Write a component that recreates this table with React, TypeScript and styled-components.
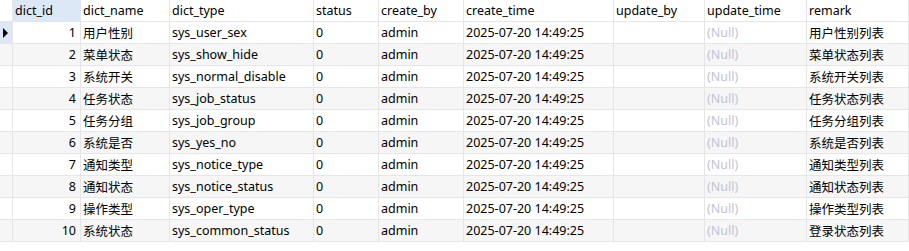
import React from "react";
import styled, { createGlobalStyle } from "styled-components";

const Global = createGlobalStyle`
  html, body { margin: 0; padding: 0; background: #ffffff; }
  body { font-family: "Noto Sans", "Noto Sans CJK SC", sans-serif; }
`;

const COLS = "13px 68px 89px 144px 65px 85px 150px 91px 102px 1fr";

const Grid = styled.div`
  display: grid;
  grid-template-columns: ${COLS};
  width: 909px;
  height: 251px;
  align-content: start;
  background: #ffffff;
  font-size: 12.5px;
  color: #000000;
`;

const Cell = styled.div<{ $bg?: string; $align?: "left" | "right"; $null?: boolean }>`
  box-sizing: border-box;
  height: 22px;
  border-right: 1px solid #e6e6e6;
  border-bottom: 1px solid #e6e6e6;
  background: ${(p) => p.$bg ?? "#ffffff"};
  display: flex;
  align-items: center;
  justify-content: ${(p) => (p.$align === "right" ? "flex-end" : "flex-start")};
  padding: 0 3px 0 2px;
  padding-right: ${(p) => (p.$align === "right" ? "4px" : "3px")};
  white-space: nowrap;
  overflow: hidden;
  color: ${(p) => (p.$null ? "#c3c3d3" : "#000000")};
`;

const HeadCell = styled(Cell)`
  font-weight: normal;
`;

const Indicator = styled(Cell)`
  padding: 0;
  justify-content: center;
`;

const Arrow = styled.span`
  width: 0;
  height: 0;
  border-top: 5px solid transparent;
  border-bottom: 5px solid transparent;
  border-left: 5px solid #000000;
  margin-left: -1px;
`;

const headers = [
  "dict_id",
  "dict_name",
  "dict_type",
  "status",
  "create_by",
  "create_time",
  "update_by",
  "update_time",
  "remark",
];

const rows: [number, string, string, string][] = [
  [1, "用户性别", "sys_user_sex", "用户性别列表"],
  [2, "菜单状态", "sys_show_hide", "菜单状态列表"],
  [3, "系统开关", "sys_normal_disable", "系统开关列表"],
  [4, "任务状态", "sys_job_status", "任务状态列表"],
  [5, "任务分组", "sys_job_group", "任务分组列表"],
  [6, "系统是否", "sys_yes_no", "系统是否列表"],
  [7, "通知类型", "sys_notice_type", "通知类型列表"],
  [8, "通知状态", "sys_notice_status", "通知状态列表"],
  [9, "操作类型", "sys_oper_type", "操作类型列表"],
  [10, "系统状态", "sys_common_status", "登录状态列表"],
];

const SELECTED = "#dce8f6";

export default function App() {
  return (
    <>
      <Global />
      <Grid>
        <HeadCell />
        {headers.map((h, i) => (
          <HeadCell key={h} $bg={i === 0 ? SELECTED : "#ffffff"}>
            {h}
          </HeadCell>
        ))}
        {rows.map(([id, name, type, remark], r) => {
          const bg = r % 2 === 1 ? "#f6f6f6" : "#ffffff";
          return (
            <React.Fragment key={id}>
              <Indicator $bg={r === 0 ? SELECTED : bg}>{r === 0 && <Arrow />}</Indicator>
              <Cell $bg={bg} $align="right">{id}</Cell>
              <Cell $bg={bg}>{name}</Cell>
              <Cell $bg={bg}>{type}</Cell>
              <Cell $bg={bg}>0</Cell>
              <Cell $bg={bg}>admin</Cell>
              <Cell $bg={bg}>2025-07-20 14:49:25</Cell>
              <Cell $bg={bg} />
              <Cell $bg={bg} $null>(Null)</Cell>
              <Cell $bg={bg}>{remark}</Cell>
            </React.Fragment>
          );
        })}
      </Grid>
    </>
  );
}
